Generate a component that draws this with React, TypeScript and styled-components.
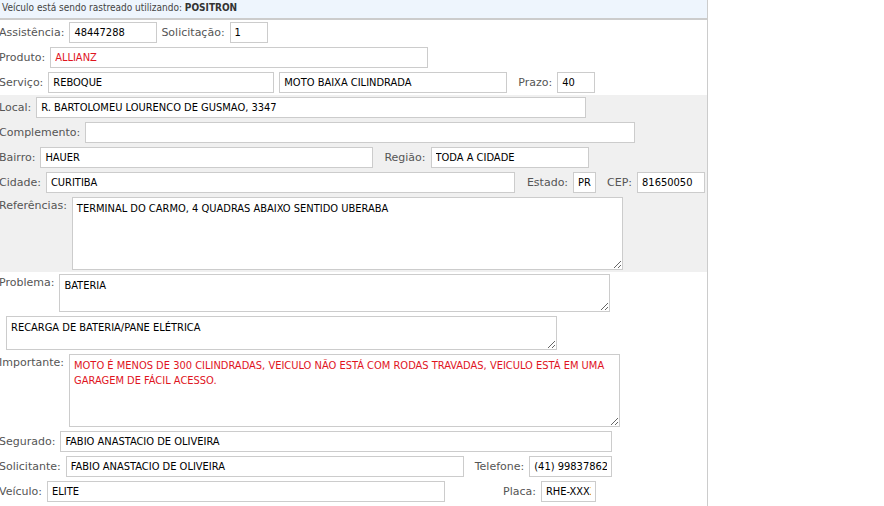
import React from 'react';
import styled, { createGlobalStyle } from 'styled-components';

const GlobalStyle = createGlobalStyle`
  html, body {
    margin: 0;
    padding: 0;
    background: #ffffff;
  }
`;

const Page = styled.div`
  width: 707px;
  min-height: 506px;
  border-right: 1px solid #cccccc;
  overflow: hidden;
  font-family: 'DejaVu Sans', Verdana, sans-serif;
`;

const TrackBar = styled.div`
  height: 18px;
  line-height: 16px;
  padding-left: 2px;
  background: #eef5fd;
  border-bottom: 2px solid #cccccc;
  font-family: 'DejaVu Sans Condensed', 'DejaVu Sans', sans-serif;
  font-size: 10px;
  color: #444444;

  strong {
    color: #333333;
  }
`;

const Section = styled.div<{ $shaded?: boolean }>`
  background: ${(p) => (p.$shaded ? '#f0f0f0' : 'transparent')};
`;

const Row = styled.div<{ $top?: boolean; $indent?: number }>`
  display: flex;
  align-items: ${(p) => (p.$top ? 'flex-start' : 'center')};
  padding: 2px 0;
  margin-left: ${(p) => (p.$indent ?? -1)}px;
`;

const Label = styled.span<{ $gap?: number; $top?: boolean }>`
  margin-left: ${(p) => p.$gap ?? 0}px;
  margin-right: 5px;
  padding-top: ${(p) => (p.$top ? 2 : 0)}px;
  font-size: 11px;
  line-height: 13px;
  color: #555555;
  white-space: nowrap;
`;

const Field = styled.input<{ $w: number; $danger?: boolean }>`
  box-sizing: border-box;
  width: ${(p) => p.$w}px;
  height: 21px;
  margin: 0;
  padding: 0 4px;
  border: 1px solid #cccccc;
  background: #ffffff;
  font-family: 'DejaVu Sans Condensed', 'DejaVu Sans', sans-serif;
  font-size: 11px;
  color: ${(p) => (p.$danger ? '#e0141e' : '#000000')};
  outline: none;
`;

const Memo = styled.textarea<{ $h: number; $danger?: boolean }>`
  box-sizing: border-box;
  width: 551px;
  height: ${(p) => p.$h}px;
  margin: 0;
  padding: 3px 4px;
  border: 1px solid #cccccc;
  background: #ffffff;
  font-family: 'DejaVu Sans Condensed', 'DejaVu Sans', sans-serif;
  font-size: 11px;
  line-height: 15px;
  color: ${(p) => (p.$danger ? '#e0141e' : '#000000')};
  outline: none;
`;

export default function App() {
  return (
    <Page>
      <GlobalStyle />
      <TrackBar>
        Veículo está sendo rastreado utilizando: <strong>POSITRON</strong>
      </TrackBar>

      <Section>
        <Row>
          <Label>Assistência:</Label>
          <Field $w={88} readOnly defaultValue="48447288" />
          <Label $gap={4}>Solicitação:</Label>
          <Field $w={38} readOnly defaultValue="1" />
        </Row>
        <Row>
          <Label>Produto:</Label>
          <Field $w={378} $danger readOnly defaultValue="ALLIANZ" />
        </Row>
        <Row>
          <Label>Serviço:</Label>
          <Field $w={226} readOnly defaultValue="REBOQUE" />
          <Label $gap={0} />
          <Field $w={228} readOnly defaultValue="MOTO BAIXA CILINDRADA" />
          <Label $gap={11}>Prazo:</Label>
          <Field $w={38} readOnly defaultValue="40" />
        </Row>
      </Section>

      <Section $shaded>
        <Row>
          <Label>Local:</Label>
          <Field $w={550} readOnly defaultValue="R. BARTOLOMEU LOURENCO DE GUSMAO, 3347" />
        </Row>
        <Row>
          <Label>Complemento:</Label>
          <Field $w={550} readOnly defaultValue="" />
        </Row>
        <Row>
          <Label>Bairro:</Label>
          <Field $w={333} readOnly defaultValue="HAUER" />
          <Label $gap={11}>Região:</Label>
          <Field $w={158} readOnly defaultValue="TODA A CIDADE" />
        </Row>
        <Row>
          <Label>Cidade:</Label>
          <Field $w={469} readOnly defaultValue="CURITIBA" />
          <Label $gap={12}>Estado:</Label>
          <Field $w={23} readOnly defaultValue="PR" />
          <Label $gap={11}>CEP:</Label>
          <Field $w={68} readOnly defaultValue="81650050" />
        </Row>
        <Row $top>
          <Label $top>Referências:</Label>
          <Memo $h={73} readOnly defaultValue="TERMINAL DO CARMO, 4 QUADRAS ABAIXO SENTIDO UBERABA" />
        </Row>
      </Section>

      <Section>
        <Row $top>
          <Label $top>Problema:</Label>
          <Memo $h={38} readOnly defaultValue="BATERIA" />
        </Row>
        <Row $top $indent={6}>
          <Memo $h={34} readOnly defaultValue="RECARGA DE BATERIA/PANE ELÉTRICA" />
        </Row>
        <Row $top>
          <Label $top>Importante:</Label>
          <Memo
            $h={73}
            $danger
            readOnly
            defaultValue="MOTO É MENOS DE 300 CILINDRADAS, VEICULO NÃO ESTÁ COM RODAS TRAVADAS, VEICULO ESTÁ EM UMA GARAGEM DE FÁCIL ACESSO."
          />
        </Row>
        <Row>
          <Label>Segurado:</Label>
          <Field $w={552} readOnly defaultValue="FABIO ANASTACIO DE OLIVEIRA" />
        </Row>
        <Row>
          <Label>Solicitante:</Label>
          <Field $w={398} readOnly defaultValue="FABIO ANASTACIO DE OLIVEIRA" />
          <Label $gap={11}>Telefone:</Label>
          <Field $w={83} readOnly defaultValue="(41) 998378627" />
        </Row>
        <Row>
          <Label>Veículo:</Label>
          <Field $w={398} readOnly defaultValue="ELITE" />
          <Label $gap={58}>Placa:</Label>
          <Field $w={55} readOnly defaultValue="RHE-XXXX" />
        </Row>
      </Section>
    </Page>
  );
}
